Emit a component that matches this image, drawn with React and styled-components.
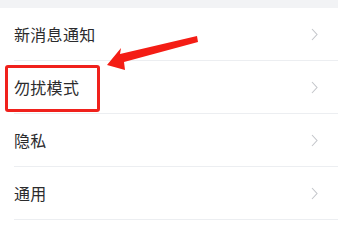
import React from "react";
import styled, { createGlobalStyle } from "styled-components";

const GlobalStyle = createGlobalStyle`
  body {
    margin: 0;
    background: #ffffff;
    font-family: "Noto Sans CJK SC", "Noto Sans", sans-serif;
  }
`;

const ITEMS = [
  { text: "新消息通知" },
  { text: "勿扰模式", marked: true },
  { text: "隐私" },
  { text: "通用" },
];

const Page = styled.div`
  position: relative;
  width: 338px;
  height: 226px;
  overflow: hidden;
  background: #ffffff;
`;

const TopBand = styled.div`
  height: 8px;
  background: #f2f3f5;
`;

const List = styled.ul`
  list-style: none;
  margin: 0;
  padding: 0 0 0 14px;
`;

const Row = styled.li`
  position: relative;
  display: flex;
  align-items: center;
  justify-content: space-between;
  height: 52px;
  padding-right: 20px;
  border-bottom: 1px solid #eceef1;
  font-size: 16px;
  color: #2b2b2d;
`;

const Label = styled.span`
  line-height: 1;
  letter-spacing: 0.3px;
`;

const Chevron = styled.svg`
  width: 7px;
  height: 13px;
  margin-top: 1px;
`;

const Marker = styled.div`
  position: absolute;
  left: -9px;
  top: 4px;
  width: 89px;
  height: 41px;
  border: 3px solid #f0211c;
  border-radius: 3px;
`;

const Arrow = styled.svg`
  position: absolute;
  left: 0;
  top: 0;
  width: 338px;
  height: 226px;
  pointer-events: none;
`;

export default function App() {
  return (
    <Page>
      <GlobalStyle />
      <TopBand />
      <List>
        {ITEMS.map((item, i) => (
          <Row key={i}>
            <Label>{item.text}</Label>
            <Chevron viewBox="0 0 7 13">
              <path d="M1 1 L6 6.5 L1 12" fill="none" stroke="#c4c6ca" strokeWidth="1.1" />
            </Chevron>
            {item.marked && <Marker />}
          </Row>
        ))}
      </List>
      <Arrow viewBox="0 0 338 226">
        <polygon
          points="107,65 121,48 120,54 197,36 198,42 124,62 125,70"
          fill="#f41d15"
        />
      </Arrow>
    </Page>
  );
}
